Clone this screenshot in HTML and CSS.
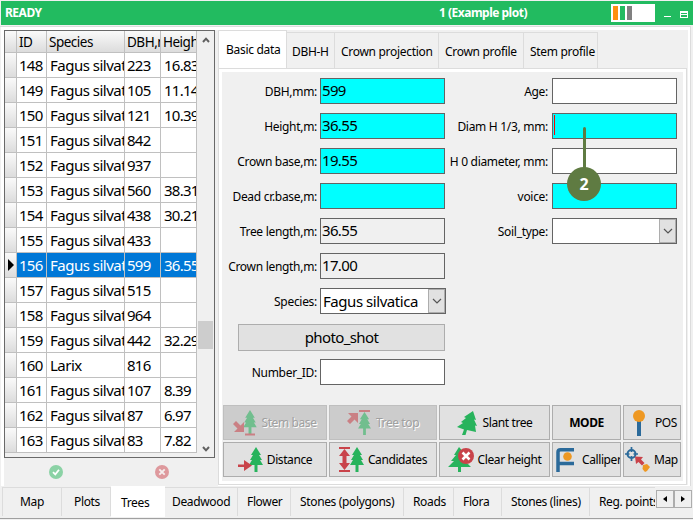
FILE: index.html
```html
<!DOCTYPE html>
<html>
<head>
    <title>Example plot</title>
    <meta charset="utf-8">
    <link rel="stylesheet" href="styles.css">
</head>
<body>
    <svg class="defs">
        <symbol id="tree" viewBox="0 0 14 25">
            <path fill="#27b35c" d="M7 0L12 8H10L13 13H11L14 18H8.5V25H5.5V18H0L3 13H1L4 8H2Z"/>
        </symbol>
    </svg>
    <div class="titlebar">
        <span class="state">READY</span>
        <span class="plot">1 (Example plot)</span>
        <span class="battery"><i class="orange"></i><i class="green"></i><i class="gray"></i></span>
        <svg class="winbtns" width="26" height="10">
            <path fill="#fff" d="M0 6h7v1h-7zM16 1h8v7h-8zM17 3v1h6v-1zM17 5v2h6v-2z" fill-rule="evenodd"/>
        </svg>
    </div>
    <div class="main">
        <div class="left">
            <div class="gridbox">
                <table class="trees">
                    <colgroup><col class="c0"><col class="c1"><col class="c2"><col class="c3"><col class="c4"></colgroup>
                    <thead>
                    <tr><th></th><th>ID</th><th>Species</th><th>DBH,mm</th><th>Height,m</th></tr>
                    </thead>
                    <tbody>
                    <tr><th></th><td>148</td><td>Fagus silvatica</td><td>223</td><td>16.83</td></tr>
                    <tr><th></th><td>149</td><td>Fagus silvatica</td><td>105</td><td>11.14</td></tr>
                    <tr><th></th><td>150</td><td>Fagus silvatica</td><td>121</td><td>10.39</td></tr>
                    <tr><th></th><td>151</td><td>Fagus silvatica</td><td>842</td><td></td></tr>
                    <tr><th></th><td>152</td><td>Fagus silvatica</td><td>937</td><td></td></tr>
                    <tr><th></th><td>153</td><td>Fagus silvatica</td><td>560</td><td>38.31</td></tr>
                    <tr><th></th><td>154</td><td>Fagus silvatica</td><td>438</td><td>30.21</td></tr>
                    <tr><th></th><td>155</td><td>Fagus silvatica</td><td>433</td><td></td></tr>
                    <tr class="selected"><th><svg width="6" height="12"><path d="M0 0L6 6L0 12z"/></svg></th><td>156</td><td>Fagus silvatica</td><td>599</td><td>36.55</td></tr>
                    <tr><th></th><td>157</td><td>Fagus silvatica</td><td>515</td><td></td></tr>
                    <tr><th></th><td>158</td><td>Fagus silvatica</td><td>964</td><td></td></tr>
                    <tr><th></th><td>159</td><td>Fagus silvatica</td><td>442</td><td>32.29</td></tr>
                    <tr><th></th><td>160</td><td>Larix</td><td>816</td><td></td></tr>
                    <tr><th></th><td>161</td><td>Fagus silvatica</td><td>107</td><td>8.39</td></tr>
                    <tr><th></th><td>162</td><td>Fagus silvatica</td><td>87</td><td>6.97</td></tr>
                    <tr><th></th><td>163</td><td>Fagus silvatica</td><td>83</td><td>7.82</td></tr>
                    </tbody>
                </table>
                <div class="scroll">
                    <svg width="8" height="6"><path d="M1 5L4 1.7L7 5" fill="none" stroke="#606060" stroke-width="2"/></svg>
                    <div class="thumb"></div>
                    <svg width="8" height="6"><path d="M1 1L4 4.3L7 1" fill="none" stroke="#606060" stroke-width="2"/></svg>
                </div>
            </div>
            <div class="confirm">
                <svg width="14" height="14"><circle cx="7" cy="7" r="7" fill="#8bd2a5"/><path d="M4 7.2L6.3 9.4L10 4.8" fill="none" stroke="#fff" stroke-width="1.8"/></svg>
                <svg width="14" height="14"><circle cx="7" cy="7" r="7" fill="#de999d"/><path d="M4.3 4.3L9.7 9.7M9.7 4.3L4.3 9.7" stroke="#f5eeee" stroke-width="1.9"/></svg>
            </div>
        </div>
        <div class="right">
            <div class="tabs">
                <div class="tab t1 active">Basic data</div>
                <div class="tab t2">DBH-H</div>
                <div class="tab t3">Crown projection</div>
                <div class="tab t4">Crown profile</div>
                <div class="tab t5">Stem profile</div>
            </div>
            <div class="page">
                <div class="form">
                    <div class="col1">
                        <div class="row"><label>DBH,mm:</label><div class="input cyan">599</div></div>
                        <div class="row"><label>Height,m:</label><div class="input cyan">36.55</div></div>
                        <div class="row"><label>Crown base,m:</label><div class="input cyan">19.55</div></div>
                        <div class="row"><label>Dead cr.base,m:</label><div class="input cyan"></div></div>
                        <div class="row"><label>Tree length,m:</label><div class="input readonly">36.55</div></div>
                        <div class="row"><label>Crown length,m:</label><div class="input readonly">17.00</div></div>
                        <div class="row"><label>Species:</label><div class="input combo wide"><span>Fagus silvatica</span><b><svg width="10" height="6"><path d="M1 1L5 5L9 1" fill="none" stroke="#555" stroke-width="1.2"/></svg></b></div></div>
                        <div class="photo">photo_shot</div>
                        <div class="row"><label>Number_ID:</label><div class="input"></div></div>
                    </div>
                    <div class="col2">
                        <div class="row"><label>Age:</label><div class="input"></div></div>
                        <div class="row"><label>Diam H 1/3, mm:</label><div class="input cyan"><span class="caret"></span></div></div>
                        <div class="row"><label>H 0 diameter, mm:</label><div class="input"></div></div>
                        <div class="row"><label>voice:</label><div class="input cyan"></div></div>
                        <div class="row"><label>Soil_type:</label><div class="input combo"><span></span><b><svg width="10" height="6"><path d="M1 1L5 5L9 1" fill="none" stroke="#555" stroke-width="1.2"/></svg></b></div></div>
                        <div class="marker">2</div>
                    </div>
                </div>
                <div class="buttons">
                    <div class="btn disabled">
                        <svg width="24" height="26"><use href="#tree" x="10" y="0" width="14" height="24"/><path fill="#c9434a" d="M12 23.500h10v2h-10zM11 12V22H1L4.500 18.500L0 14L3 11L7.500 15.500z"/></svg>
                        <span>Stem base</span>
                    </div>
                    <div class="btn disabled">
                        <svg width="25" height="25"><use href="#tree" x="10" y="2" width="15" height="23"/><path fill="#c9434a" d="M12 0h11v2h-11zM1 3H11V13L7.500 9.500L3 14L0 11L4.500 6.500z"/></svg>
                        <span>Tree top</span>
                    </div>
                    <div class="btn b3">
                        <svg width="20" height="24"><path fill="#27b35c" d="M16 0L19 9L17 8.500L20 15L18 14.500L19 21L10 19L8.500 24H5L7 18.500L0 16L6 12L4 11L9 7L7 6z"/></svg>
                        <span>Slant tree</span>
                    </div>
                    <div class="btn mode"><span>MODE</span></div>
                    <div class="btn b5">
                        <svg width="12" height="26"><path fill="#2b6a9a" d="M4 10h4v16h-4z"/><circle cx="6" cy="6" r="6" fill="#ee9822"/></svg>
                        <span>POS</span>
                    </div>
                    <div class="btn b6">
                        <svg width="25" height="25"><use href="#tree" x="11" y="0" width="14" height="25"/><path fill="#c9434a" d="M0 17.500h6v-4.500L14 18.500L6 24v-4h-6z"/></svg>
                        <span>Distance</span>
                    </div>
                    <div class="btn b7">
                        <svg width="25" height="25"><use href="#tree" x="11" y="0" width="14" height="25"/><path fill="#c9434a" d="M0 0h11v2h-11zM0 23h11v2h-11zM5.500 2L11 9H7.500V16H11L5.500 23L0 16H3.500V9H0z"/></svg>
                        <span>Candidates</span>
                    </div>
                    <div class="btn b8">
                        <svg width="26" height="25"><path fill="#27b35c" d="M11 0L18 8H15L20 14H17L23 20H13V25H10V20H0L6 14H3L8 8H6z"/><circle cx="18" cy="9" r="8" fill="#c9434a"/><path d="M14.500 5.500L21.500 12.500M21.500 5.500L14.500 12.500" stroke="#fff" stroke-width="2.500"/></svg>
                        <span>Clear height</span>
                    </div>
                    <div class="btn b9">
                        <svg width="18" height="24"><path fill="none" stroke="#2b6a9a" stroke-width="3.500" d="M2 24V4Q2 1.750 4.500 1.750H18M2 15.500H18"/><circle cx="11.500" cy="8.500" r="4.300" fill="#ee9822"/></svg>
                        <span>Calliper</span>
                    </div>
                    <div class="btn b10">
                        <svg width="25" height="25"><circle cx="6.500" cy="7" r="4" fill="none" stroke="#2b6a9a" stroke-width="2"/><path d="M6.500 0V5M6.500 9V14M0 7H4.500M8.500 7H13" stroke="#2b6a9a" stroke-width="1.700"/><path fill="#c9434a" d="M10 9.500L18 10L16 12.500L19.500 16L17 18.500L13.500 15L11 17z"/><path fill="#ee9822" d="M18 18L22 17L25 20L22 24L20 25L17.500 22z"/></svg>
                        <span>Map</span>
                    </div>
                </div>
            </div>
        </div>
    </div>
    <div class="bottom">
        <div class="btabs">
            <div class="btab m1">Map</div>
            <div class="btab m2">Plots</div>
            <div class="btab m3 on">Trees</div>
            <div class="btab m4">Deadwood</div>
            <div class="btab m5">Flower</div>
            <div class="btab m6">Stones (polygons)</div>
            <div class="btab m7">Roads</div>
            <div class="btab m8">Flora</div>
            <div class="btab m9">Stones (lines)</div>
            <div class="btab m10">Reg. points</div>
        </div>
        <div class="arrows">
            <b><svg width="4" height="6"><path d="M4 0V6L0 3z"/></svg></b>
            <b><svg width="4" height="6"><path d="M0 0V6L4 3z"/></svg></b>
        </div>
    </div>
</body>
</html>
```

FILE: styles.css
```css
* {
    box-sizing: border-box;
}
body {
    margin: 0;
    width: 693px;
    height: 520px;
    overflow: hidden;
    background-color: #f0f0f0;
    font-family: "Noto Sans", "Open Sans", sans-serif;
    font-size: 12px;
    line-height: 16px;
    color: #000;
    white-space: nowrap;
}
svg {
    display: block;
    flex: none;
}
.defs {
    display: none;
}
.titlebar {
    display: flex;
    align-items: center;
    height: 24px;
    margin: 1px 0 0 1px;
    padding-left: 4px;
    background-color: #22bb60;
    color: #fff;
    font-weight: bold;
    letter-spacing: -0.5px;
}
.state {
    width: 434px;
}
.plot {
    width: 172px;
}
.battery {
    display: flex;
    gap: 2px;
    width: 44px;
    height: 18px;
    padding: 2px;
    background-color: #fff;
}
.battery i {
    width: 5px;
    height: 14px;
}
.orange { background-color: #ff9010; }
.green { background-color: #22bb60; }
.gray { background-color: #808080; }
.winbtns {
    margin: 3px 0 0 9px;
}
.main {
    display: flex;
    height: 460px;
    margin: 1px 2px 0 0;
    border-top: 1px solid #dcdcdc;
    border-right: 1px solid #dcdcdc;
}
.left {
    width: 218px;
    height: 459px;
    padding: 3px 0 0 4px;
    background: linear-gradient(#fff, #fff) 1px 0 / 3px 100% no-repeat, linear-gradient(#fff, #fff) 1px 0 / 100% 3px no-repeat;
}
.gridbox {
    display: flex;
    width: 211px;
    height: 428px;
    border: 1px solid #696969;
}
.trees {
    table-layout: fixed;
    width: 192px;
    height: 422px;
    border-spacing: 0;
    flex: none;
}
.c0 { width: 12px; }
.c1 { width: 30px; }
.c2 { width: 78px; }
.c3 { width: 36px; }
.c4 { width: 36px; }
.trees th, .trees td {
    overflow: hidden;
    height: 25px;
    padding: 0;
    border-right: 1px solid #c0c0c0;
    border-bottom: 1px solid #c0c0c0;
    font-weight: normal;
    text-align: left;
}
.trees th {
    background: linear-gradient(#fafafa, #dcdcdc);
}
.trees thead th {
    height: 22px;
    padding-left: 2px;
    font-size: 13.5px;
    letter-spacing: -0.5px;
}
.trees td {
    padding-left: 2px;
    background-color: #fff;
    font-size: 15px;
    line-height: 24px;
    letter-spacing: -0.75px;
}
.trees td:nth-child(3) {
    padding-left: 3px;
    letter-spacing: -0.5px;
}
.trees td:last-child {
    padding-left: 3px;
}
.trees tbody th {
    padding-left: 3px;
}
.trees .selected td {
    background-color: #0078d7;
    color: #fff;
}
.scroll {
    display: flex;
    flex-direction: column;
    align-items: center;
    width: 15px;
    margin-left: 1px;
    padding: 6px 0 5px;
}
.thumb {
    width: 15px;
    height: 28px;
    margin: 278px 0 auto;
    background-color: #cdcdcd;
}
.confirm {
    display: flex;
    gap: 92px;
    padding: 7px 0 0 45px;
}
.right {
    width: 472px;
    height: 459px;
    border-top: 3px solid #fff;
    border-right: 2px solid #fff;
    border-bottom: 1px solid #fff;
}
.tabs {
    display: flex;
    align-items: flex-end;
    height: 38px;
}
.tab {
    height: 36px;
    padding: 11px 0 0 5px;
    border-top: 1px solid #dcdcdc;
    border-right: 1px solid #dcdcdc;
    letter-spacing: -0.3px;
}
.tab.active {
    height: 38px;
    padding-left: 7px;
    border-left: 1px solid #dcdcdc;
    background-color: #fff;
}
.t1 { width: 69px; }
.t2 { width: 48px; }
.t3 { width: 104px; }
.tab.t3, .tab.t4, .tab.t5 { padding-left: 6px; }
.t4 { width: 85px; }
.t5 { width: 74px; }
.page {
    width: 469px;
    height: 417px;
    border: 1px solid #dcdcdc;
    box-shadow: inset 0 0 0 3px #fff;
    padding: 9px 4px 0;
}
.form {
    display: flex;
    height: 327px;
}
.col1 {
    width: 224px;
}
.col2 {
    position: relative;
    width: 234px;
}
.row {
    display: flex;
    align-items: center;
    height: 26px;
    margin-bottom: 9px;
}
.row label {
    width: 94px;
    margin-right: 3px;
    padding-top: 2px;
    text-align: right;
    letter-spacing: -0.3px;
}
.col2 .row label {
    width: 101px;
    margin-right: 4px;
}
.input {
    width: 125px;
    height: 26px;
    padding-left: 1px;
    border: 1px solid #646464;
    background-color: #fff;
    font-size: 15px;
    line-height: 23px;
    letter-spacing: -0.65px;
}
.cyan {
    background-color: #00ffff;
}
.readonly {
    background-color: #f0f0f0;
}
.wide {
    width: 126px;
}
.combo {
    display: flex;
    justify-content: space-between;
    padding-left: 2px;
    line-height: 25px;
    letter-spacing: -0.45px;
}
.combo b {
    display: flex;
    align-items: center;
    justify-content: center;
    width: 17px;
    height: 24px;
    border: 1px solid #adadad;
    background-color: #e1e1e1;
}
.caret {
    display: block;
    width: 1px;
    height: 20px;
    margin-top: 1px;
    background-color: #f00;
}
.photo {
    width: 207px;
    height: 27px;
    margin: 10px 0 8px 15px;
    border: 1px solid #adadad;
    background-color: #e1e1e1;
    font-size: 15px;
    line-height: 25px;
    letter-spacing: -0.6px;
    text-align: center;
}
/* callout pin lies over the two fields */
.marker {
    position: absolute;
    left: 120px;
    top: 89px;
    width: 34px;
    height: 34px;
    border-radius: 17px;
    background-color: #5f7b42;
    color: #fff;
    font-size: 16px;
    font-weight: bold;
    line-height: 34px;
    text-align: center;
}
.marker::before {
    content: "";
    position: absolute;
    left: 16px;
    top: -40px;
    width: 3px;
    height: 42px;
    border-radius: 2px;
    background-color: #5f7b42;
}
.buttons {
    display: grid;
    grid-template-columns: 104px 108px 111px 69px 58px;
    grid-template-rows: 35px 35px;
    gap: 2px;
}
.btn {
    display: flex;
    align-items: center;
    justify-content: center;
    gap: 4px;
    overflow: hidden;
    border: 1px solid #adadad;
    background-color: #e1e1e1;
    letter-spacing: -0.4px;
}
.disabled {
    border-color: #bfbfbf;
    background-color: #cccccc;
    color: #a0a0a0;
    text-shadow: 1px 1px #fff;
}
.disabled svg {
    opacity: 0.55;
}
.mode {
    font-weight: bold;
}
.b3 { gap: 6px; }
.b5 { justify-content: flex-start; padding-left: 9px; gap: 10px; }
.b9 { justify-content: flex-start; padding-left: 3px; gap: 8px; }
.b10 { justify-content: flex-start; padding-left: 1px; }
.bottom {
    display: flex;
    height: 33px;
    border-bottom: 1px solid #a0a0a0;
}
.btabs {
    display: flex;
    width: 655px;
    height: 32px;
    padding-left: 2px;
    overflow: hidden;
}
.btab {
    flex: none;
    height: 29px;
    margin-top: 1px;
    padding-top: 6px;
    border-top: 1px solid #dcdcdc;
    border-right: 1px solid #dcdcdc;
    letter-spacing: -0.35px;
}
.btab.on {
    height: 31px;
    margin-top: 0;
    padding-top: 9px;
    border: 0;
    background-color: #fff;
}
.m1 { width: 60px; padding-left: 17px; border-left: 1px solid #dcdcdc; }
.m2 { width: 49px; padding-left: 12px; }
.m3 { width: 54px; padding-left: 10px; }
.m4 { width: 73px; padding-left: 7px; }
.m5 { width: 53px; padding-left: 9px; }
.m6 { width: 113px; padding-left: 9px; }
.m7 { width: 50px; padding-left: 9px; }
.m8 { width: 48px; padding-left: 9px; }
.m9 { width: 88px; padding-left: 9px; }
.m10 { width: 80px; padding-left: 9px; }
.arrows {
    display: flex;
    margin: 4px 0 0 1px;
}
.arrows b {
    display: flex;
    align-items: center;
    justify-content: center;
    width: 18px;
    height: 18px;
    border: 1px solid #adadad;
    background-color: #f0f0f0;
}
```
